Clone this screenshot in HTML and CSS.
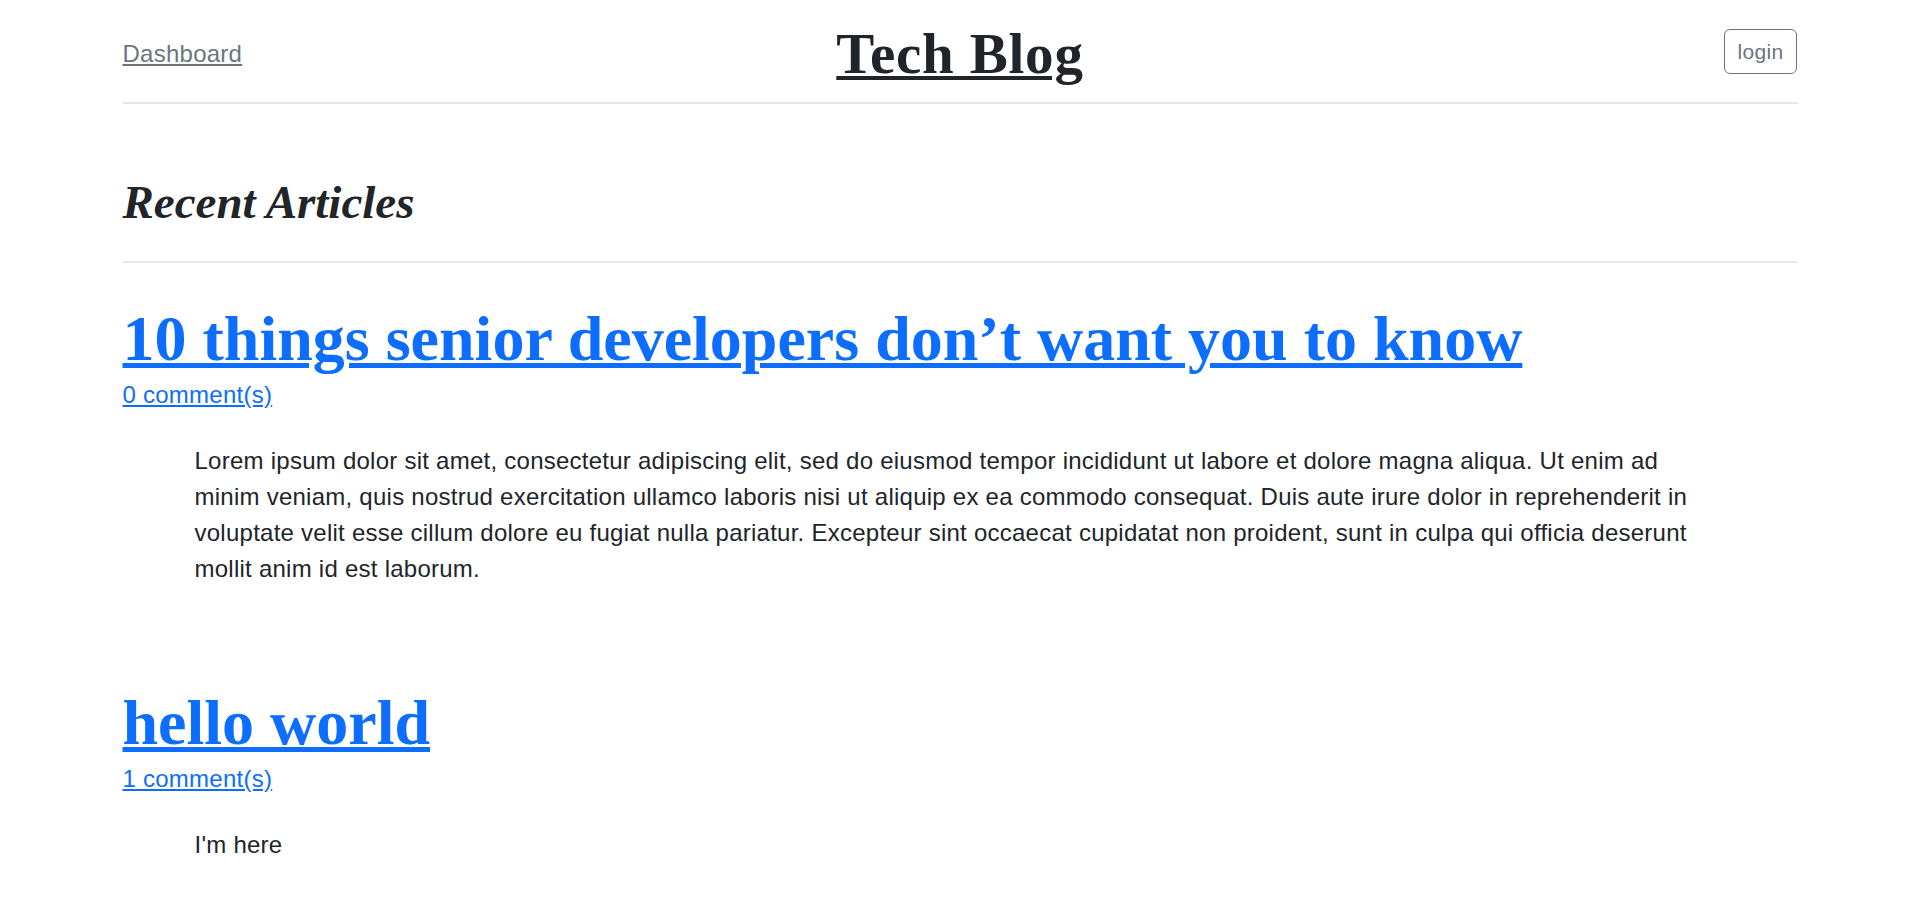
FILE: index.html
```html
<!DOCTYPE html>
<html lang="en">
<head>
<meta charset="utf-8">
<title>Tech Blog</title>
<link rel="stylesheet" href="styles.css">
</head>
<body>
<div class="container">
  <header class="blog-header">
    <div class="header-col header-left"><a class="link-secondary" href="#">Dashboard</a></div>
    <div class="header-col header-center"><a class="blog-logo" href="#">Tech Blog</a></div>
    <div class="header-col header-right"><a class="btn-outline" href="#">login</a></div>
  </header>
  <main>
    <h3 class="section-title">Recent Articles</h3>
    <article class="post">
      <h2 class="post-title"><a href="#">10 things senior developers don’t want you to know</a></h2>
      <div class="post-meta"><a href="#">0 comment(s)</a></div>
      <p class="post-body">Lorem ipsum dolor sit amet, consectetur adipiscing elit, sed do eiusmod tempor incididunt ut labore et dolore magna aliqua. Ut enim ad minim veniam, quis nostrud exercitation ullamco laboris nisi ut aliquip ex ea commodo consequat. Duis aute irure dolor in reprehenderit in voluptate velit esse cillum dolore eu fugiat nulla pariatur. Excepteur sint occaecat cupidatat non proident, sunt in culpa qui officia deserunt mollit anim id est laborum.</p>
    </article>
    <article class="post">
      <h2 class="post-title"><a href="#">hello world</a></h2>
      <div class="post-meta"><a href="#">1 comment(s)</a></div>
      <p class="post-body">I'm here</p>
    </article>
  </main>
</div>
</body>
</html>
```

FILE: styles.css
```css
* {
  box-sizing: border-box;
}

html, body {
  margin: 0;
  padding: 0;
  background: #ffffff;
}

body {
  font-family: "Liberation Sans", Arial, sans-serif;
  font-size: 24px;
  line-height: 36px;
  color: #212529;
  letter-spacing: 0.25px;
}

a {
  color: #0d6efd;
}

.container {
  max-width: 1711px;
  margin: 0 auto;
  padding: 0 18px;
}

/* Header */
.blog-header {
  display: grid;
  grid-template-columns: 1fr 1fr 1fr;
  align-items: center;
  padding: 24px 0;
  border-bottom: 2px solid #e6e6e6;
  line-height: 1;
}

.header-left {
  padding-top: 6px;
  line-height: 24px;
}

.link-secondary {
  color: #6c757d;
}

.header-center {
  text-align: center;
}

.blog-logo {
  display: inline-block;
  font-family: "Liberation Serif", "Times New Roman", serif;
  font-weight: 700;
  font-size: 57px;
  line-height: 48px;
  padding-top: 6px;
  letter-spacing: 0.8px;
  color: #212529;
  text-decoration-thickness: 4px;
  text-underline-offset: 3px;
}

.header-right {
  display: flex;
  justify-content: flex-end;
  align-items: center;
}

.btn-outline {
  display: inline-block;
  font-size: 21px;
  line-height: 31px;
  padding: 6px 13px;
  border: 1px solid #6c757d;
  border-radius: 6px;
  color: #6c757d;
  text-decoration: none;
  letter-spacing: 0.3px;
}

/* Main */
.section-title {
  margin: 70px 0 37px;
  padding-bottom: 31px;
  border-bottom: 2px solid #e3e6ea;
  font-family: "Liberation Serif", "Times New Roman", serif;
  font-style: italic;
  font-weight: 700;
  font-size: 47px;
  line-height: 56px;
  letter-spacing: 0;
  color: #212529;
}

.post + .post {
  margin-top: 97px;
}

.post-title {
  margin: 0;
  font-family: "Liberation Serif", "Times New Roman", serif;
  font-weight: 700;
  font-size: 64px;
  line-height: 77px;
  letter-spacing: 0;
}

.post-title a {
  text-decoration-thickness: 5px;
  text-underline-offset: 3px;
}

.post-meta {
  line-height: 36px;
}

.post-body {
  margin: 30px 72px 0;
}
```
